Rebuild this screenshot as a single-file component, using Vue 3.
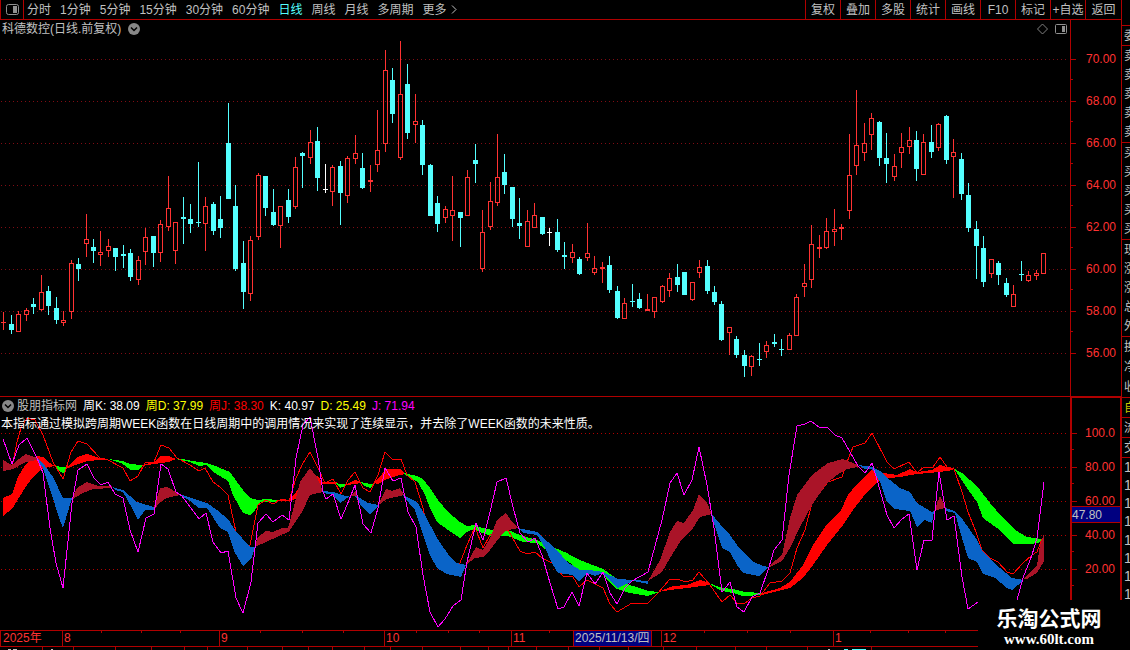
<template>
  <div class="terminal">
    <div class="main">
      <header class="toolbar">
        <button class="panel-toggle" type="button" aria-label="panel">
          <svg width="13" height="11" viewBox="0 0 13 11">
            <rect x="0.5" y="0.5" width="12" height="10" rx="2" fill="none" stroke="#909090" />
            <rect x="7" y="2" width="4" height="7" fill="#909090" />
          </svg>
        </button>
        <nav class="periods">
          <button
            v-for="p in periods"
            :key="p"
            type="button"
            class="period"
            :class="{ active: p === activePeriod }"
            @click="activePeriod = p"
          >{{ p }}<svg v-if="p === '更多'" class="more" width="6" height="9" viewBox="0 0 6 9"><path d="M1 0.5L5 4.5L1 8.5" fill="none" stroke="#c0c0c0" /></svg></button>
        </nav>
        <nav class="tools">
          <button v-for="t in tools" :key="t" type="button" class="tool">{{ t }}</button>
        </nav>
      </header>

      <!-- K线主图 -->
      <section class="pane">
        <div class="plot">
          <svg class="price-svg" viewBox="0 20 1070 376" preserveAspectRatio="none" shape-rendering="crispEdges">
            <path v-for="y in priceGrid" :key="y" :d="`M1 ${y + 0.5}H1068`" class="grid dim" />
            <g v-for="c in bars" :key="c.x" :fill="c.color">
              <rect :x="c.x" :y="c.high" width="1" :height="c.top - c.high" />
              <rect :x="c.x" :y="c.bottom" width="1" :height="c.low - c.bottom" />
              <rect v-if="c.hollow" :x="c.x - 1.5" :y="c.top + 0.5" width="4" :height="c.bottom - c.top - 1" fill="none" :stroke="c.color" />
              <rect v-else :x="c.x - 2" :y="c.top" width="5" :height="c.bottom - c.top" />
            </g>
          </svg>
          <div class="caption">
            <span>科德数控(日线.前复权)</span>
            <svg class="drop" width="12" height="12" viewBox="0 0 12 12">
              <circle cx="6" cy="6" r="6" fill="#888" />
              <path d="M3 4.5L6 7.5L9 4.5" fill="none" stroke="#000" stroke-width="1.5" />
            </svg>
            <svg class="corner" width="31" height="12" viewBox="0 0 31 12">
              <path d="M5.5 1L10.5 6L5.5 11L0.5 6Z" fill="none" stroke="#808080" />
              <rect x="18.5" y="1.5" width="11" height="9" rx="1" fill="none" stroke="#909090" />
              <rect x="25" y="3" width="3" height="6" fill="#909090" />
            </svg>
          </div>
        </div>
        <ol class="axis price-axis">
          <li v-for="v in priceLabels" :key="v">{{ v }}</li>
        </ol>
      </section>

      <!-- KDJ 副图 -->
      <section class="pane lower">
        <div class="plot">
          <svg class="kdj-svg" viewBox="0 397 1070 233" preserveAspectRatio="none" shape-rendering="crispEdges">
            <path v-for="y in kdjGrid" :key="y" :d="`M1 ${y + 0.5}H1068`" class="grid" />
            <polygon v-for="(b, i) in weekBands" :key="'w' + i" :points="b[1]" :fill="b[0]" />
            <polyline v-for="(l, i) in weekJ" :key="'j' + i" :points="l" class="week-j" />
            <polygon v-for="(b, i) in dayBands" :key="'d' + i" :points="b[1]" :fill="b[0]" />
            <polyline :points="dayJ" class="day-j" />
          </svg>
          <div class="kdj-head">
            <div class="values">
              <svg width="12" height="12" viewBox="0 0 12 12">
                <circle cx="6" cy="6" r="6" fill="#888" />
                <path d="M3 4.5L6 7.5L9 4.5" fill="none" stroke="#000" stroke-width="1.5" />
              </svg>
              <span class="name">股朋指标网</span>
              <span v-for="v in values" :key="v.text" :class="v.tone">{{ v.text }}</span>
            </div>
            <p class="note">本指标通过模拟跨周期WEEK函数在日线周期中的调用情况来实现了连续显示，并去除了WEEK函数的未来性质。</p>
          </div>
        </div>
        <ol class="axis kdj-axis">
          <li v-for="v in kdjLabels" :key="v">{{ v }}</li>
          <li class="cursor-value">47.80</li>
        </ol>
      </section>

      <!-- 时间轴 -->
      <footer class="timeline">
        <svg class="ticks" viewBox="0 0 1121 20" preserveAspectRatio="none" shape-rendering="crispEdges">
          <rect v-for="x in upperTicks" :key="'u' + x" :x="x" y="0" width="1" height="3" fill="#b00000" />
          <rect v-for="x in lowerTicks" :key="'l' + x" :x="x" y="16" width="1" height="4" fill="#b00000" />
          <path d="M8 19.5H11M13 19.5H17M51 19.5H53M828 19.5H830" stroke="#c0c0c0" />
          <path d="M844 19.5H848M852 19.5H866" stroke="#54ffff" />
        </svg>
        <div class="months">
          <span v-for="m in months" :key="m.text" :class="{ cursor: m.cursor }">{{ m.text }}</span>
        </div>
      </footer>
    </div>

    <aside class="quotes">
      <div v-for="(g, i) in quoteGroups" :key="i" :class="['group', g.kind]">
        <span v-for="(t, k) in g.rows" :key="k">{{ t }}</span>
      </div>
    </aside>

    <div class="watermark">
      <strong>乐淘公式网</strong>
      <a href="#">www.60lt.com</a>
    </div>
  </div>
</template>

<script setup>
import { ref, computed } from 'vue';

const RED = '#ff3232';
const CYAN = '#54ffff';

const periods = ['分时', '1分钟', '5分钟', '15分钟', '30分钟', '60分钟', '日线', '周线', '月线', '多周期', '更多'];
const activePeriod = ref('日线');
const tools = ['复权', '叠加', '多股', '统计', '画线', 'F10', '标记', '+自选', '返回'];

const priceLabels = ['70.00', '68.00', '66.00', '64.00', '62.00', '60.00', '58.00', '56.00'];
const priceGrid = priceLabels.map((_, i) => 59 + i * 42);
const kdjLabels = ['100.0', '80.00', '60.00', '40.00', '20.00'];
const kdjGrid = kdjLabels.map((_, i) => 433 + i * 34);

// 每根K线: 最高 实体上沿 实体下沿 最低 类型(r阳 c阴 w平)
const rawBars = `
312 322 323 330 r|315 324 330 334 c|311 314 332 332 r|308 310 315 321 r|298 304 307 314 c|275 292 310 311 r|286 291 306 315 c|297 308 320 324 c|311 320 323 326 r|260 263 312 319 r
258 264 269 281 c|214 239 244 257 r|239 247 251 263 c|231 252 255 266 r|239 246 251 257 r|248 248 257 271 c|245 254 256 268 c|249 253 277 281 c|256 260 280 285 r|228 237 252 265 r
236 236 253 267 c|220 224 253 262 r|176 208 227 231 r|222 222 251 264 r|197 217 219 244 c|204 219 224 233 c|162 222 223 227 c|197 206 224 251 r|202 204 231 235 c|196 219 228 238 c
103 143 199 199 c|185 206 269 271 c|241 263 292 309 c|236 240 294 301 r|173 175 237 240 r|176 176 208 216 c|189 212 225 226 c|206 206 226 248 r|189 200 217 223 c|157 167 207 209 r
152 153 156 188 c|130 142 158 164 r|127 141 178 191 c|164 189 190 193 w|165 167 192 206 r|161 166 193 225 c|156 158 196 203 r|135 153 159 164 r|153 168 188 189 c|165 180 182 192 r
110 150 165 172 r|50 70 144 152 r|68 80 114 123 c|41 94 158 160 r|64 84 133 139 c|94 121 125 143 r|120 125 165 175 c|164 165 216 216 c|196 203 224 232 c|206 209 218 223 r
176 210 216 241 r|212 212 218 247 c|170 177 216 216 r|144 160 164 183 c|210 232 269 272 r|182 201 227 230 r|134 177 203 206 r|154 172 185 194 c|187 187 219 227 c|198 223 226 239 c
210 221 247 247 r|203 215 228 228 r|217 217 234 235 c|228 232 233 246 w|219 232 250 252 c|242 255 257 269 c|244 252 258 263 r|257 259 274 275 c|223 253 258 261 r|256 268 273 275 r
262 267 269 283 r|256 265 290 293 c|286 291 318 319 c|298 303 319 319 r|284 301 302 307 c|293 299 308 309 c|294 309 311 311 r|297 297 312 318 r|285 286 302 303 r|273 278 291 297 r
264 277 285 292 c|272 272 295 295 c|282 282 300 301 r|260 267 273 278 r|260 266 291 294 c|286 292 302 305 c|301 304 340 341 c|327 327 333 355 r|336 339 355 358 c|350 355 366 377 c
355 356 367 376 r|343 359 360 366 c|341 345 352 358 r|334 342 344 347 c|339 349 350 356 c|333 335 350 350 r|294 297 336 336 r|264 283 287 297 r|225 244 280 288 r|235 247 249 258 r
218 231 248 249 r|209 229 232 246 r|224 227 229 240 r|134 175 211 219 r|90 145 166 175 r|123 143 153 161 r|113 118 135 150 r|121 122 158 166 c|133 158 164 183 c|154 166 177 181 r
133 147 153 168 r|127 140 147 154 r|131 140 169 181 c|134 142 175 175 r|125 142 152 158 c|123 124 148 151 r|115 116 160 164 c|139 152 157 198 r|153 159 194 200 c|183 195 228 232 c
221 229 246 279 c|236 248 282 287 c|259 259 274 278 r|261 263 275 285 c|278 283 295 297 c|285 294 307 307 r|261 274 275 281 c|271 275 281 282 r|270 273 276 280 r|253 253 274 274 r`;

const bars = computed(() =>
  rawBars.trim().split(/[|\n]/).map((row, i) => {
    const [high, top, bottom, low, kind] = row.split(' ');
    return {
      x: Math.round(3.2 + i * 7.482),
      high: +high,
      top: +top,
      bottom: +bottom,
      low: +low,
      color: { r: RED, c: CYAN, w: '#ffffff' }[kind],
      hollow: kind === 'r' && bottom - top > 2,
    };
  })
);

const values = [
  { text: '周K: 38.09', tone: 'white' },
  { text: '周D: 37.99', tone: 'yellow' },
  { text: '周J: 38.30', tone: 'red' },
  { text: 'K: 40.97', tone: 'white' },
  { text: 'D: 25.49', tone: 'yellow' },
  { text: 'J: 71.94', tone: 'magenta' },
];

// 周线 K/D 之间的填充带
const weekBands = [
  ['#ff0000', '3,498 12,494 18,477 25,465 30,460 37,456 43,457 48,462 55,466 48,467 41,470 34,476 27,485 20,496 12,509 3,516'],
  ['#00ff00', '54,465 60,467 66,467 65,471 63,473 58,470'],
  ['#ff0000', '65,467 70,465 77,457 87,454 100,458 110,459 100,460 87,461 78,464 68,468'],
  ['#00ff00', '108,459 123,461 130,464 142,465 142,466 138,470 131,470 121,463'],
  ['#ff0000', '142,465 154,462 161,456 169,456 176,459 169,462 154,464 142,466'],
  ['#00ff00', '175,459 183,459 192,461 206,463 213,465 230,472 237,482 243,490 250,498 258,500 266,499 277,500 277,502 260,502 255,510 250,515 243,513 233,495 228,481 215,473 206,465 199,466 190,462'],
  ['#ff0000', '277,500 289,500 296,492 303,484 310,476 318,476 322,482 337,482 337,484 322,484 305,495 290,501 277,501'],
  ['#00ff00', '335,483 340,484 346,484 345,486 340,488'],
  ['#ff0000', '345,485 355,480 361,482 361,483 347,485'],
  ['#00ff00', '360,482 370,484 375,484 370,488 365,486'],
  ['#ff0000', '374,483 382,474 386,469 400,469 405,474 400,475 387,479 378,484'],
  ['#00ff00', '404,473 417,476 423,479 430,488 438,500 448,512 460,522 467,526 474,525 482,528 493,530 508,530 520,535 537,540 553,547 567,553 570,555 580,560 603,569 613,576 620,582 633,586 648,591 659,592 648,596 630,593 617,589 607,580 603,573 590,571 579,570 570,563 557,555 545,549 537,543 523,542 508,536 492,536 482,533 474,529 467,532 460,538 448,530 437,522 430,508 425,495 418,482 405,475'],
  ['#ff0000', '658,592 673,586 687,585 700,580 710,583 710,585 687,588 670,590'],
  ['#00ff00', '709,583 722,588 733,589 745,592 762,593 762,595 743,596 733,593 722,591 713,586'],
  ['#ff0000', '762,593 780,588 790,582 803,565 813,545 827,524 840,512 848,495 857,484 872,469 883,473 897,475 910,469 917,472 932,470 940,465 953,469 953,470 940,472 917,474 900,477 890,478 877,482 867,492 853,510 843,525 827,545 813,565 803,578 790,588 762,595'],
  ['#00ff00', '953,468 962,473 977,486 990,503 1003,518 1015,530 1027,537 1034,538 1042,539 1038,543 1030,544 1013,544 1007,538 997,528 983,518 977,502 967,488 957,473'],
];

const weekJ = [
  '12,467 17,442 21,428 27,418 35,420 43,435 53,462 63,479 71,452 78,441 87,444 100,458 108,460 123,468 130,481 138,476 145,463 154,462 161,445 169,448 177,458 190,465 199,471 205,468 213,482 220,487 228,495 236,532 243,560 250,545 258,505 266,500 273,504 282,499 289,501 296,478 303,463 310,452 318,468 325,483 333,479 341,494 348,480 355,472 363,488 370,492 378,475 385,452 393,460 401,459 407,475 415,482 423,508 430,540 445,570 460,563 467,545 475,527 483,548 490,535 508,530 520,551 527,554 535,552 542,558 552,563 563,576 573,577 579,587 587,580 603,588 610,604 617,612 632,603 648,603 658,593 670,579 678,579 685,582 693,580 699,572 710,585 722,602 730,595 737,603 745,603 752,598 760,596 770,583 782,581 790,573 797,548 805,530 812,503 828,482 842,477 847,462 853,447 865,443 872,433 887,462 894,469 909,462 917,473 924,467 933,467 940,457 947,467 954,469 962,492 968,512 976,532 982,550 990,558 998,562 1007,572 1013,574 1023,563 1032,555 1037,552 1042,539',
];

// 日线 K/D 之间的填充带
const dayBands = [
  ['#aa1428', '3,460 12,465 19,459 26,454 37,458 37,460 26,462 13,469 3,471'],
  ['#0a64c8', '37,458 43,463 53,477 63,498 72,498 63,528 58,515 52,495 43,468 37,460'],
  ['#aa1428', '72,498 77,488 87,482 98,486 112,486 112,488 93,489 83,493 73,499'],
  ['#0a64c8', '112,487 123,490 137,502 154,507 154,510 145,510 138,520 132,508 123,492 115,490'],
  ['#aa1428', '154,507 160,488 167,487 180,494 180,495 167,498 160,502 155,509'],
  ['#0a64c8', '179,494 207,503 217,510 228,519 235,530 250,547 255,547 252,557 243,566 235,553 228,532 220,528 207,508 199,508 190,501'],
  ['#aa1428', '255,546 258,537 266,531 273,532 282,528 288,528 293,510 300,482 310,468 317,477 323,491 323,492 310,495 302,512 290,530 288,532 277,537 255,547'],
  ['#0a64c8', '323,491 333,492 345,496 355,495 368,503 378,505 378,507 370,514 362,507 355,496 350,496 340,503 333,495 323,493'],
  ['#aa1428', '350,496 356,491 357,496'],
  ['#aa1428', '378,505 386,489 392,491 400,488 404,495 400,496 387,499 380,504'],
  ['#0a64c8', '403,495 417,502 425,515 437,538 450,557 457,563 466,565 461,577 447,574 437,568 430,555 423,535 415,510 404,497'],
  ['#aa1428', '466,565 476,547 483,550 490,538 497,520 506,513 512,522 518,528 508,530 503,533 490,550 483,557 475,558'],
  ['#0a64c8', '518,528 537,532 548,542 557,550 567,562 580,570 590,570 603,572 618,579 648,581 648,584 633,581 618,588 610,581 603,573 595,576 587,573 579,582 572,575 558,573 552,563 545,548 537,535 523,533'],
  ['#aa1428', '648,581 660,560 670,532 677,521 684,523 693,510 699,494 707,503 712,514 700,517 693,528 680,542 670,558 662,572'],
  ['#0a64c8', '711,513 720,524 730,535 740,549 752,561 763,566 769,567 759,576 743,573 737,565 730,552 722,548 713,520'],
  ['#aa1428', '769,566 782,555 790,518 797,495 812,475 828,463 843,459 858,465 858,467 847,469 837,475 827,483 812,505 800,527 790,548 782,561 770,567'],
  ['#0a64c8', '858,465 872,467 880,471 890,480 900,488 910,492 917,503 932,512 934,511 932,523 925,520 917,527 910,511 895,509 887,502 880,482 872,469 865,469'],
  ['#aa1428', '934,511 940,496 946,508 940,509'],
  ['#0a64c8', '945,508 955,511 963,520 977,540 983,552 1000,568 1012,578 1024,580 1012,590 1007,588 995,578 983,574 977,562 968,558 962,538 955,513 945,511'],
  ['#aa1428', '1024,579 1037,565 1040,545 1044,534 1044,561 1037,573 1027,579'],
];

const dayJ = '3,439 12,464 19,445 27,438 37,458 43,473 50,528 56,563 63,588 72,503 78,470 87,464 94,478 101,485 108,482 115,494 123,498 130,530 138,552 146,518 154,514 161,464 168,469 176,492 182,496 199,519 206,513 213,542 221,553 228,551 236,598 243,613 251,582 258,523 266,514 273,522 282,515 289,520 296,458 303,425 310,417 318,458 323,492 326,499 333,494 341,519 347,505 355,485 363,524 371,533 378,508 385,468 393,481 401,478 408,512 416,527 423,575 430,612 438,627 445,619 453,606 461,600 467,562 476,523 483,540 490,512 497,482 506,478 513,507 520,533 528,542 535,538 542,555 550,583 558,609 564,607 572,592 579,606 587,573 595,584 603,572 610,593 617,604 625,588 632,581 648,572 662,520 670,483 677,473 684,495 692,480 699,447 707,485 714,528 722,592 730,582 737,607 744,612 752,597 760,593 769,567 774,550 782,540 789,475 797,426 805,424 811,421 820,428 827,427 835,435 842,438 858,466 865,473 872,463 878,483 887,515 894,528 902,519 909,514 917,570 924,540 932,540 939,472 947,520 954,516 962,577 968,609 978,602 990,622 1005,612 1017,600 1023,578 1032,555 1037,538 1044,482';

const months = [
  { text: '2025年' }, { text: '8' }, { text: '9' }, { text: '10' }, { text: '11' },
  { text: '2025/11/13/四', cursor: true }, { text: '' }, { text: '12' }, { text: '1' },
];
const upperTicks = [101, 141, 180, 260, 302, 343, 416, 448, 479, 549, 704, 747, 790, 870, 908, 945];
const lowerTicks = [42, 73, 115, 151, 184, 207, 247, 282, 308, 332, 364, 390, 422, 460, 488, 508, 536, 568, 599, 628, 663, 696, 735, 766, 807, 871];

const quoteGroups = [
  { kind: 'blank', rows: [] },
  { kind: 'single', rows: ['委'] },
  { kind: 'five', rows: ['卖', '卖', '卖', '卖', '卖'] },
  { kind: 'five', rows: ['买', '买', '买', '买', '买'] },
  { kind: 'five', rows: ['现', '涨', '涨', '总', '外'] },
  { kind: 'three', rows: ['换', '净', '收'] },
  { kind: 'single gold', rows: ['自'] },
  { kind: 'single', rows: ['流'] },
  { kind: 'single', rows: ['交'] },
  { kind: 'ticks-list', rows: ['1', '1', '1', '1', '1', '1', '1', '1'] },
];
</script>

<style>
body {
  margin: 0;
  background: #000;
}
</style>

<style scoped>
.terminal {
  position: relative;
  display: flex;
  overflow: hidden;
  background: #000;
  color: #c0c0c0;
  font-family: "Liberation Sans", "Noto Sans CJK SC", sans-serif;
  font-size: 12px;
  line-height: 18px;
  white-space: nowrap;
}

.main {
  flex: 1;
  min-width: 0;
}

button {
  padding: 0;
  border: 0;
  background: none;
  color: inherit;
  font: inherit;
  cursor: pointer;
}

/* 顶部工具栏 */
.toolbar {
  display: flex;
  height: 19px;
  border-bottom: 1px solid #b00000;
}

.panel-toggle {
  display: flex;
  align-items: center;
  justify-content: center;
  width: 24px;
  box-sizing: border-box;
  border-left: 1px solid #b00000;
  border-right: 1px solid #b00000;
}

.periods {
  display: flex;
  gap: 9px;
  padding-left: 3px;
}

.period.active {
  color: #54ffff;
}

.more {
  margin-left: 4px;
}

.tools {
  display: flex;
  margin-left: auto;
}

.tool {
  width: 35px;
  box-sizing: border-box;
  border-left: 1px solid #b00000;
}

.tool:last-child {
  width: 36px;
}

/* 图表区 */
.pane {
  display: flex;
}

.plot {
  display: grid;
  flex: 1;
  min-width: 0;
}

.plot > * {
  grid-area: 1 / 1;
  min-width: 0;
}

.price-svg,
.kdj-svg {
  display: block;
  width: 100%;
  height: 376px;
}

.kdj-svg {
  height: 233px;
}

.grid {
  fill: none;
  stroke: #b00000;
  stroke-dasharray: 1 3;
}

.grid.dim {
  stroke: #800c14;
}

.week-j,
.day-j {
  fill: none;
  stroke: #ff0000;
  stroke-width: 1;
}

.day-j {
  stroke: #ff00ff;
}

.caption {
  display: flex;
  align-self: start;
  align-items: center;
  gap: 7px;
  padding: 0 2px;
}

.corner {
  margin-left: auto;
}

.lower {
  border-top: 1px solid #b00000;
}

.kdj-head {
  align-self: start;
}

.values {
  display: flex;
  align-items: center;
  gap: 6px;
  padding-left: 2px;
}

.values .name {
  margin-left: -3px;
}

.note {
  margin: 0;
  padding-left: 1px;
  color: #fff;
}

.white { color: #fff; }
.yellow { color: #ffff00; }
.red { color: #ff0000; }
.magenta { color: #ff00ff; }

/* 坐标刻度 */
.axis {
  position: relative;
  width: 51px;
  box-sizing: border-box;
  margin: 0;
  padding: 18px 5px 0 0;
  border-left: 1px solid #b00000;
  color: #ff3232;
  list-style: none;
}

.axis li {
  position: relative;
  display: flex;
  align-items: center;
  justify-content: space-between;
  height: 42px;
}

.axis li::before {
  content: '';
  width: 5px;
  height: 1px;
  background: #b00000;
}

.axis li:not(:last-child)::after {
  content: '';
  position: absolute;
  left: 0;
  bottom: 0;
  width: 2px;
  height: 1px;
  background: #b00000;
}

.kdj-axis {
  border: 2px solid #b00000;
  border-width: 1px 1px 0 2px;
}

.kdj-axis li {
  height: 34px;
}

.kdj-axis .cursor-value {
  position: absolute;
  top: 108px;
  left: 0;
  right: 0;
  height: 15px;
  border-top: 1px solid #b00000;
  border-bottom: 1px solid #b00000;
  background: #000080;
  color: #c0c0c0;
}

.kdj-axis .cursor-value::before {
  display: none;
}

/* 时间轴 */
.timeline {
  display: grid;
  height: 20px;
  color: #ff3232;
}

.timeline > * {
  grid-area: 1 / 1;
}

.ticks {
  width: 100%;
  height: 20px;
}

.months {
  display: grid;
  grid-template-columns: 62fr 157fr 165fr 127fr 62fr 78fr 10fr 172fr 288fr;
  height: 15px;
  border-top: 1px solid #b00000;
  border-bottom: 1px solid #b00000;
  line-height: 15px;
}

.months span {
  min-width: 0;
  padding-left: 1px;
  border-left: 1px solid #b00000;
}

.months span:first-child {
  padding-left: 2px;
}

.months .cursor {
  background: #000080;
  color: #c0c0c0;
}

/* 右侧盘口, 窗口边缘只露出首字 */
.quotes {
  width: 9px;
  box-sizing: border-box;
  overflow: hidden;
  border-left: 1px solid #b00000;
}

.group {
  display: flex;
  flex-direction: column;
  box-sizing: border-box;
  padding-left: 2px;
  border-bottom: 1px solid #b00000;
}

.group span {
  display: flex;
  flex: 1;
  align-items: center;
}

.blank { height: 26px; }
.single { height: 20px; }
.five { height: 97px; }
.three { height: 61px; }
.gold { color: #c8c800; }

.ticks-list {
  height: 145px;
  border-bottom: 0;
  font-size: 14px;
}

/* 右下角站点标识 */
.watermark {
  position: absolute;
  right: 0;
  bottom: 0;
  display: flex;
  flex-direction: column;
  align-items: center;
  width: 152px;
  height: 50px;
  box-sizing: border-box;
  padding: 8px 10px 0 0;
  background: #000;
  color: #fff;
}

.watermark strong {
  font-size: 21px;
  line-height: 22px;
}

.watermark a {
  color: #fff;
  font-family: "Liberation Serif", serif;
  font-size: 15px;
  font-weight: bold;
  line-height: 18px;
  text-decoration: none;
}
</style>
